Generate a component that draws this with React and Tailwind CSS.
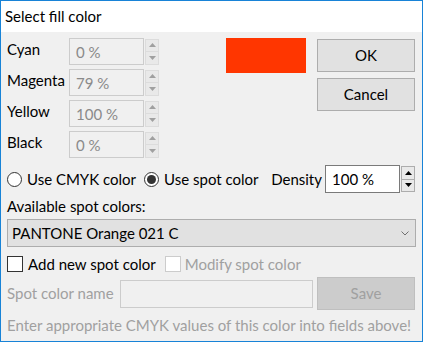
import React, { useState } from "react";

const font = { fontFamily: "Lato, 'Noto Sans', sans-serif" };

// Small up/down spinner next to numeric fields
const Spin = ({ enabled }) => {
  const border = enabled ? "border-[#adadad]" : "border-[#dcdcdc]";
  const tri = enabled ? "#000000" : "#a0a0a0";
  return (
    <div className="flex flex-col w-[14px] h-[26px] ml-[1px]">
      <div className={`flex-1 border ${border} bg-[#e9e9e9] flex items-center justify-center`}>
        <svg width="7" height="4" viewBox="0 0 7 4">
          <path d="M0 4 L3.5 0 L7 4 Z" fill={tri} />
        </svg>
      </div>
      <div className={`flex-1 border border-t-0 ${border} bg-[#e9e9e9] flex items-center justify-center`}>
        <svg width="7" height="4" viewBox="0 0 7 4">
          <path d="M0 0 L7 0 L3.5 4 Z" fill={tri} />
        </svg>
      </div>
    </div>
  );
};

const CmykRow = ({ label, value }) => (
  <div className="flex items-center h-[27px]">
    <div className="w-[62px] text-[15px] text-black leading-none mb-[5px]">{label}</div>
    <div className="w-[75px] h-[27px] border border-[#cccccc] bg-[#f0f0f0] flex items-center pl-[6px] pt-[2px] text-[15px] text-[#8a8a8a]">
      {value}
    </div>
    <Spin />
  </div>
);

const App = () => {
  const [mode, setMode] = useState("spot");

  return (
    <div style={font} className="w-[423px] h-[342px] border border-[#1883d7] bg-[#f0f0f0] flex flex-col overflow-hidden">
      {/* Title bar */}
      <div className="h-[31px] bg-white flex items-center pl-[4px] text-[15px] text-black">
        Select fill color
      </div>

      <div className="flex flex-col px-[6px]">
        {/* CMYK fields, swatch and buttons */}
        <div className="flex pt-[6px]">
          <div className="flex flex-col gap-[4px]">
            <CmykRow label="Cyan" value="0 %" />
            <CmykRow label="Magenta" value="79 %" />
            <CmykRow label="Yellow" value="100 %" />
            <CmykRow label="Black" value="0 %" />
          </div>
          <div className="ml-[67px] w-[80px] h-[35px] bg-[#ff3600]" />
          <div className="ml-[11px] flex flex-col gap-[6px] pt-[1px]">
            <button className="w-[98px] h-[33px] border border-[#adadad] bg-[#e1e1e1] text-[15px] text-black">
              OK
            </button>
            <button className="w-[98px] h-[33px] border border-[#adadad] bg-[#e1e1e1] text-[15px] text-black">
              Cancel
            </button>
          </div>
        </div>

        {/* Mode + density */}
        <div className="flex items-center h-[28px] mt-[7px] text-[15px] text-black">
          <label className="flex items-center" onClick={() => setMode("cmyk")}>
            <span className="w-[15px] h-[15px] rounded-full border border-[#333333] bg-white flex items-center justify-center">
              {mode === "cmyk" && <span className="w-[9px] h-[9px] rounded-full bg-[#333333]" />}
            </span>
            <span className="ml-[5px]">Use CMYK color</span>
          </label>
          <label className="flex items-center ml-[8px]" onClick={() => setMode("spot")}>
            <span className="w-[15px] h-[15px] rounded-full border border-[#333333] bg-white flex items-center justify-center">
              {mode === "spot" && <span className="w-[9px] h-[9px] rounded-full bg-[#333333]" />}
            </span>
            <span className="ml-[5px]">Use spot color</span>
          </label>
          <span className="ml-auto mr-[3px]">Density</span>
          <div className="w-[75px] h-[28px] border border-[#7a7a7a] bg-white flex items-center pl-[6px]">
            100 %
          </div>
          <Spin enabled />
          <div className="w-[1px]" />
        </div>

        {/* Spot color list */}
        <div className="h-[26px] flex items-center text-[15px] text-black">Available spot colors:</div>
        <div className="w-[409px] h-[28px] border border-[#adadad] bg-[#e1e1e1] flex items-center justify-between pl-[4px] pr-[6px] text-[15px] text-black">
          <span>PANTONE Orange 021 C</span>
          <svg width="8" height="5" viewBox="0 0 8 5">
            <path d="M0.5 0.5 L4 4 L7.5 0.5" fill="none" stroke="#707070" strokeWidth="1" />
          </svg>
        </div>

        {/* Checkboxes */}
        <div className="flex items-center mt-[9px] h-[16px] text-[15px]">
          <span className="w-[16px] h-[16px] border border-[#333333] bg-white" />
          <span className="ml-[5px] text-black">Add new spot color</span>
          <span className="ml-[9px] w-[16px] h-[16px] border border-[#cccccc] bg-white" />
          <span className="ml-[4px] text-[#a0a0a0]">Modify spot color</span>
        </div>

        {/* Spot name */}
        <div className="flex items-center mt-[5px] text-[15px]">
          <span className="w-[113px] text-[#a0a0a0]">Spot color name</span>
          <div className="w-[193px] h-[28px] border border-[#cccccc] bg-[#f0f0f0]" />
          <button className="ml-[4px] w-[98px] h-[33px] border border-[#bfbfbf] bg-[#cccccc] text-[#a0a0a0]">
            Save
          </button>
        </div>

        <div className="h-[30px] flex items-center text-[15px] text-[#a0a0a0]">
          Enter appropriate CMYK values of this color into fields above!
        </div>
      </div>
    </div>
  );
};

export default App;
